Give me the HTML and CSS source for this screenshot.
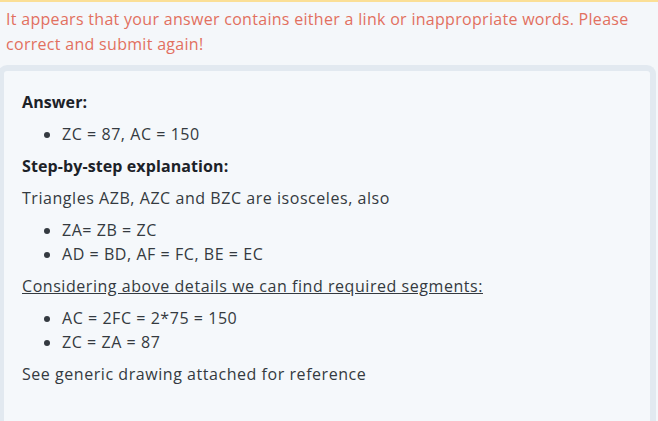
FILE: index.html
```html
<!DOCTYPE html>
<html>
<head>
<meta charset="utf-8">
<link rel="stylesheet" href="styles.css">
</head>
<body>
<div class="page">
  <div class="topbar"></div>
  <p class="warning">It appears that your answer contains either a link or inappropriate words. Please correct and submit again!</p>
  <div class="card">
    <div class="content">
      <p><strong>Answer:</strong></p>
      <ul>
        <li>ZC = 87, AC = 150</li>
      </ul>
      <p><strong>Step-by-step explanation:</strong></p>
      <p>Triangles AZB, AZC and BZC are isosceles, also</p>
      <ul>
        <li>ZA= ZB = ZC</li>
        <li>AD = BD, AF = FC, BE = EC</li>
      </ul>
      <p><span class="u">Considering above details we can find required segments:</span></p>
      <ul>
        <li>AC = 2FC = 2*75 = 150</li>
        <li>ZC = ZA = 87</li>
      </ul>
      <p>See generic drawing attached for reference</p>
    </div>
  </div>
</div>
</body>
</html>
```
FILE: styles.css
```css
html, body {
  margin: 0;
  padding: 0;
  background: #f4f7fa;
  height: 100%;
  overflow: hidden;
}
.page {
  font-family: "Open Sans", sans-serif;
  font-size: 16px;
  height: 100%;
  display: flex;
  flex-direction: column;
}
.topbar {
  height: 2px;
  background: #fbdf96;
  flex: none;
}
.warning {
  margin: 0;
  padding: 5px 20px 0 6px;
  color: #e2705f;
  line-height: 25px;
  letter-spacing: 0.3px;
  flex: none;
}
.card {
  flex: 1;
  margin: 8px 2px 0 -2px;
  border: 6px solid #e2e9f0;
  border-bottom: none;
  border-radius: 9px 9px 0 0;
  background: #f5f8fb;
}
.content {
  padding: 19px 16px 0 18px;
  color: #343a40;
  line-height: 24px;
  letter-spacing: 0.55px;
}
.content p {
  margin: 0 0 8px;
}
.content ul {
  margin: 0 0 8px;
  padding-left: 40px;
}
.content strong {
  font-weight: 700;
  color: #1c2228;
  letter-spacing: 0.1px;
}
.u {
  text-decoration: underline;
}
```
